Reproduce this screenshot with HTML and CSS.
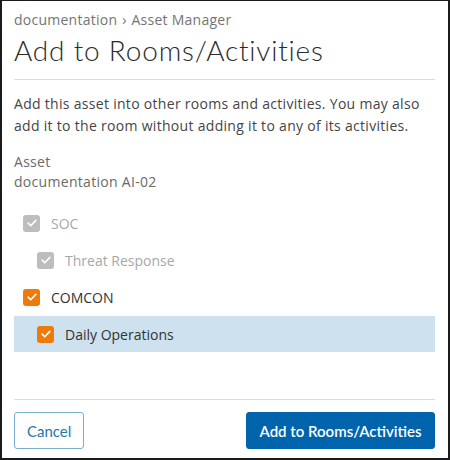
FILE: index.html
```html
<!DOCTYPE html>
<html>
<head>
<meta charset="utf-8">
<link rel="stylesheet" href="styles.css">
</head>
<body>
<div class="modal">
  <div class="breadcrumb">documentation <span class="sep">›</span> Asset Manager</div>
  <h1 class="title">Add to Rooms/Activities</h1>
  <div class="body">
    <p class="desc">Add this asset into other rooms and activities. You may also add it to the room without adding it to any of its activities.</p>
    <div class="asset">
      <div>Asset</div>
      <div>documentation AI-02</div>
    </div>
    <ul class="tree">
      <li class="row disabled"><span class="cb"><svg viewBox="0 0 16 16"><path d="M3.6 8.2l3 3 5.8-6.2"/></svg></span><span>SOC</span></li>
      <li class="row child disabled"><span class="cb"><svg viewBox="0 0 16 16"><path d="M3.6 8.2l3 3 5.8-6.2"/></svg></span><span>Threat Response</span></li>
      <li class="row"><span class="cb on"><svg viewBox="0 0 16 16"><path d="M3.6 8.2l3 3 5.8-6.2"/></svg></span><span>COMCON</span></li>
      <li class="row child selected"><span class="cb on"><svg viewBox="0 0 16 16"><path d="M3.6 8.2l3 3 5.8-6.2"/></svg></span><span>Daily Operations</span></li>
    </ul>
  </div>
  <div class="footer">
    <button class="btn outline">Cancel</button>
    <button class="btn primary">Add to Rooms/Activities</button>
  </div>
</div>
</body>
</html>
```
FILE: styles.css
```css
* { box-sizing: border-box; }
html, body { margin: 0; padding: 0; background: #fff; }
body { font-family: "Open Sans", Lato, sans-serif; }
.modal {
  width: 450px;
  height: 460px;
  border: 2px solid #1b1b1b;
  border-top-width: 1px;
  padding: 0 13px 0 12px;
  display: flex;
  flex-direction: column;
}
.breadcrumb {
  margin-top: 9px;
  font-size: 14px;
  line-height: 19px;
  color: #747474;
  letter-spacing: 0.25px;
}
.sep { margin: 0 1px; }
.title {
  margin: 5px 0 0;
  font-family: Lato, "Open Sans", sans-serif;
  font-size: 28px;
  font-weight: 300;
  line-height: 32px;
  color: #2b2b2b;
  letter-spacing: 0.8px;
  padding-bottom: 13px;
  border-bottom: 1px solid #dcdcdc;
}
.body { flex: 1; }
.desc {
  margin: 13px 0 0;
  font-size: 14px;
  line-height: 22px;
  color: #454545;
  letter-spacing: 0.3px;
}
.asset {
  margin-top: 15px;
  font-size: 14px;
  line-height: 20px;
  color: #6a6a6a;
  letter-spacing: 0.3px;
}
.tree { list-style: none; margin: 13px 0 0; padding: 0; }
.row {
  height: 36px;
  margin-bottom: 1px;
  display: flex;
  align-items: center;
  gap: 11px;
  padding-left: 9px;
  font-size: 14px;
  color: #333;
}
.row.child { padding-left: 23px; }
.row.disabled { color: #a8a8a8; }
.row.selected { background: #cde1ee; }
.cb {
  width: 17px;
  height: 17px;
  border-radius: 3px;
  background: #bdbdbd;
  display: flex;
  align-items: center;
  justify-content: center;
  flex: none;
}
.cb.on { background: #ee7a0c; }
.cb svg { width: 14px; height: 14px; fill: none; stroke: #fff; stroke-width: 1.8; stroke-linecap: round; stroke-linejoin: round; }
.footer {
  border-top: 1px solid #dcdcdc;
  padding-top: 12px;
  margin-bottom: 9px;
  display: flex;
  justify-content: space-between;
  align-items: center;
}
.btn {
  height: 37px;
  font-family: Lato, "Open Sans", sans-serif;
  font-size: 15px;
  border-radius: 3px;
  padding: 0 12px;
  cursor: pointer;
}
.btn.outline {
  background: #fff;
  border: 1px solid #79b0d0;
  color: #1d78b0;
  width: 70px;
}
.btn.primary {
  background: #0064ac;
  border: 1px solid #0064ac;
  color: #fff;
  font-weight: 600;
  width: 189px;
}
```
